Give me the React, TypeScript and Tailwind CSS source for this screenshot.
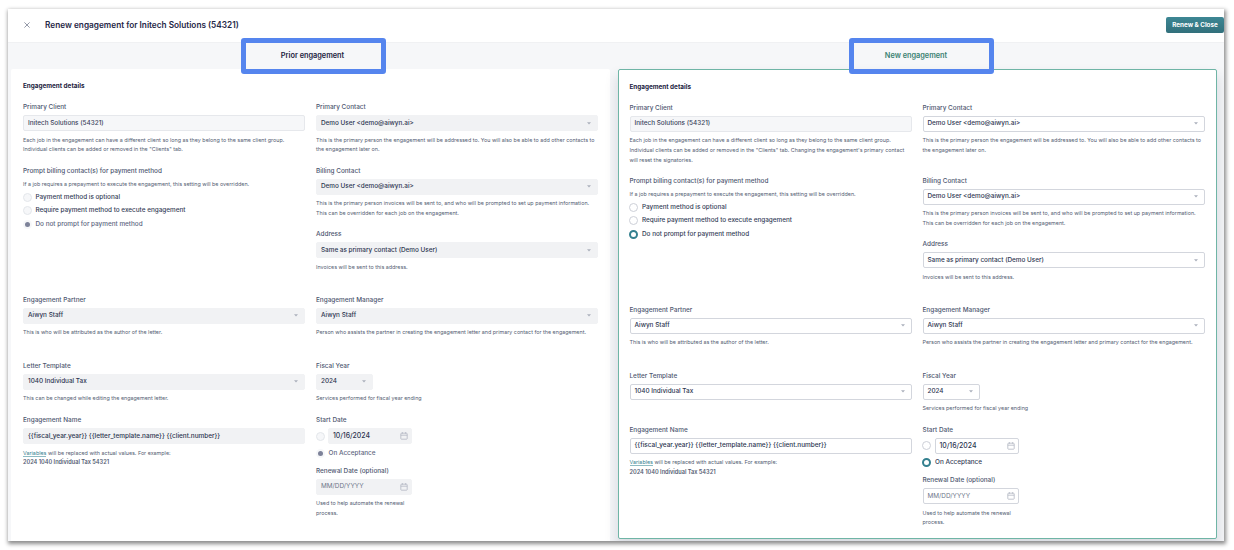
import { createContext, useContext } from "react";
import type { ReactNode } from "react";
import clsx from "clsx";

type Variant = "prior" | "new";

const VariantContext = createContext<Variant>("prior");

function useIsPrior(): boolean {
  return useContext(VariantContext) === "prior";
}

function Field({ label, className, children }: { label: string; className: string; children: ReactNode }): React.JSX.Element {
  return (
    <div className={clsx("flex shrink-0 flex-col", className)}>
      <p className="mb-[3px] h-[10px] whitespace-nowrap text-[6.42px] font-medium leading-[10px] text-[#4d566f]">{label}</p>
      {children}
    </div>
  );
}

function Help({ children, className = "mt-[4.6px]" }: { children: ReactNode; className?: string }): React.JSX.Element {
  return (
    <p className={clsx("whitespace-pre text-[5.39px] leading-[9.7px] text-[#535c72]", className)}>{children}</p>
  );
}

function Caret(): React.JSX.Element {
  return (
    <svg className="h-[3px] w-[4px] shrink-0 text-[#abb0bc]" viewBox="0 0 4 3" fill="currentColor">
      <path d="M0 0.2h4L2 2.4z" />
    </svg>
  );
}

function CalendarIcon(): React.JSX.Element {
  return (
    <svg className="h-[8px] w-[8px] shrink-0 text-[#b3b8c3]" viewBox="0 0 8 8" fill="none" stroke="currentColor" strokeWidth="0.8">
      <rect x="0.8" y="1.2" width="6.4" height="6" rx="0.7" />
      <path d="M0.8 3.2h6.4M2.4 0.1v1.6M5.6 0.1v1.6" />
    </svg>
  );
}

function Box({ children, icon, className, outlined }: { children: ReactNode; icon?: ReactNode; className?: string; outlined?: boolean }): React.JSX.Element {
  const prior = useIsPrior();

  return (
    <div
      className={clsx(
        "flex h-[16px] shrink-0 items-center justify-between rounded-[2px] border pl-[4px] text-[6.38px] font-medium",
        outlined
          ? "border-[#e6e8ec] bg-[#f6f7f9]"
          : prior
            ? "border-[#f1f2f4] bg-[#f1f2f4]"
            : "border-[#d3d6dd] bg-white",
        className,
      )}
    >
      <span className="whitespace-nowrap pt-[1.2px]">{children}</span>
      {icon}
    </div>
  );
}

function Select({ value, className }: { value: string; className?: string }): React.JSX.Element {
  return (
    <Box className={clsx("pr-[6px]", className)} icon={<Caret />}>
      <span className="text-[#2c3550]">{value}</span>
    </Box>
  );
}

function DateInput({ value, placeholder }: { value?: string; placeholder?: string }): React.JSX.Element {
  return (
    <Box className="pr-[3px]" icon={<CalendarIcon />}>
      {value ? (
        <span className="text-[6.9px] text-[#2c3550]">{value}</span>
      ) : (
        <span className="text-[6.4px] font-normal text-[#6f778a]">{placeholder}</span>
      )}
    </Box>
  );
}

function RadioDot({ checked }: { checked?: boolean }): React.JSX.Element {
  const prior = useIsPrior();

  if (prior && checked) {
    return (
      <span className="-ml-[0.5px] flex size-[9px] shrink-0 items-center justify-center rounded-full bg-[#f6f7f9]">
        <span className="size-[5px] rounded-full bg-[#7d8299]" />
      </span>
    );
  }
  return (
    <span
      className={clsx(
        "-ml-[0.5px] size-[9px] shrink-0 rounded-full",
        checked ? "border-[2.5px] border-[#34808f]" : "border",
        !checked && (prior ? "border-[#e4e7eb] bg-[#f6f7f9]" : "border-[#cdd0d8] bg-white"),
      )}
    />
  );
}

function Radio({ label, checked }: { label: string; checked?: boolean }): React.JSX.Element {
  const prior = useIsPrior();

  return (
    <div className="flex h-[13.5px] items-center gap-[4px] whitespace-nowrap text-[6.38px] font-medium">
      <RadioDot checked={checked} />
      <span className={clsx("pt-[0.5px]", prior && checked ? "text-[#5d6680]" : "text-[#333c56]")}>{label}</span>
    </div>
  );
}

function EngagementForm({ variant }: { variant: Variant }): React.JSX.Element {
  const prior = variant === "prior";

  return (
    <VariantContext.Provider value={variant}>
      <h2 className="mb-[11px] h-[10px] text-[6.35px] font-bold leading-[10px] text-[#1b2240]">
        Engagement details
      </h2>
      <div className="flex gap-[11px]">
        <div className="flex w-[282px] flex-col">
          <Field label="Primary Client" className={prior ? "h-[63.5px]" : "h-[73px]"}>
            <Box outlined>
              <span className="text-[#3a435c]">Initech Solutions (54321)</span>
            </Box>
            <Help>
              {"Each job in the engagement can have a different client so long as they belong to the same client group.\n"}
              {prior
                ? 'Individual clients can be added or removed in the "Clients" tab.'
                : 'Individual clients can be added or removed in the "Clients" tab. Changing the engagement\'s primary contact\nwill reset the signatories.'}
            </Help>
          </Field>
          <Field label="Prompt billing contact(s) for payment method" className="h-[129px]">
            <Help className="mt-[1px] mb-[1.3px]">If a job requires a prepayment to execute the engagement, this setting will be overridden.</Help>
            <Radio label="Payment method is optional" />
            <Radio label="Require payment method to execute engagement" />
            <Radio label="Do not prompt for payment method" checked />
          </Field>
          <Field label="Engagement Partner" className="h-[66px]">
            <Select value="Aiwyn Staff" />
            <Help>This is who will be attributed as the author of the letter.</Help>
          </Field>
          <Field label="Letter Template" className={prior ? "h-[54.5px]" : "h-[54px]"}>
            <Select value="1040 Individual Tax" />
            {prior ? <Help>This can be changed while editing the engagement letter.</Help> : null}
          </Field>
          <Field label="Engagement Name" className="h-[60px]">
            <Box>
              <span className="text-[6.45px] text-[#2c3550]">{"{{fiscal_year.year}} {{letter_template.name}} {{client.number}}"}</span>
            </Box>
            <Help>
              <span className="border-b border-[#8dbbc2] text-[#34808f]">Variables</span>
              {" will be replaced with actual values. For example:\n"}
              <span className="text-[5.6px] font-semibold">2024 1040 Individual Tax 54321</span>
            </Help>
          </Field>
        </div>

        <div className="flex w-[282px] flex-col">
          <Field label="Primary Contact" className={prior ? "h-[63.5px]" : "h-[73px]"}>
            <Select value="Demo User <demo@aiwyn.ai>" />
            <Help>{"This is the primary person the engagement will be addressed to. You will also be able to add other contacts to\nthe engagement later on."}</Help>
          </Field>
          <Field label="Billing Contact" className="h-[63.5px]">
            <Select value="Demo User <demo@aiwyn.ai>" />
            <Help>{"This is the primary person invoices will be sent to, and who will be prompted to set up payment information.\nThis can be overridden for each job on the engagement."}</Help>
          </Field>
          <Field label="Address" className="h-[65.5px]">
            <Select value="Same as primary contact (Demo User)" />
            <Help>Invoices will be sent to this address.</Help>
          </Field>
          <Field label="Engagement Manager" className="h-[66px]">
            <Select value="Aiwyn Staff" />
            <Help>Person who assists the partner in creating the engagement letter and primary contact for the engagement.</Help>
          </Field>
          <Field label="Fiscal Year" className={prior ? "h-[54.5px]" : "h-[54px]"}>
            <Select value="2024" className="w-[57px]" />
            <Help>Services performed for fiscal year ending</Help>
          </Field>
          <Field label="Start Date" className="h-[50.5px]">
            <div className="grid w-[96px] grid-cols-[9px_1fr] items-center gap-x-[3px]">
              <RadioDot />
              <DateInput value="10/16/2024" />
            </div>
            <div className="mt-[2.5px]">
              <Radio label="On Acceptance" checked />
            </div>
          </Field>
          <Field label="Renewal Date (optional)" className="w-[96px]">
            <DateInput placeholder="MM/DD/YYYY" />
            <Help>{"Used to help automate the renewal\nprocess."}</Help>
          </Field>
        </div>
      </div>
    </VariantContext.Provider>
  );
}

export default function App(): React.JSX.Element {
  return (
    <div className="h-[550px] w-[1234px] overflow-hidden bg-white pl-[8px] pt-[9px] font-['Inter',sans-serif]">
      <div className="relative h-[532px] w-[1216px] shadow-[1px_2px_4px_1px_rgba(0,0,0,0.45)]">
        <div className="flex h-full flex-col overflow-hidden bg-[#f6f7f9]">
          <header className="flex h-[33px] shrink-0 items-center bg-white pl-[15.5px]">
            <svg className="mb-[1px] size-[6px] text-[#7a8092]" viewBox="0 0 6 6" stroke="currentColor" strokeWidth="0.8">
              <path d="M0.4 0.4l5.2 5.2M5.6 0.4L0.4 5.6" />
            </svg>
            <h1 className="ml-[15.5px] text-[8.26px] font-semibold text-[#1f2747]">Renew engagement for Initech Solutions (54321)</h1>
            <button
              type="button"
              className="mb-[1px] ml-auto h-[16px] w-[58px] whitespace-nowrap rounded-[2px] bg-linear-to-b from-[#3d8794] to-[#32707c] pt-[1px] text-[6.3px] font-bold text-white"
            >
              Renew & Close
            </button>
          </header>

          <div className="flex h-[27px] shrink-0 items-center border-t border-[#f0f1f3] text-[7.34px] font-semibold">
            <p className="w-[609px] text-center text-[#1b2240]">Prior engagement</p>
            <p className="w-[598px] text-center text-[#3a8172]">New engagement</p>
          </div>

          <main className="flex min-h-0 flex-1 gap-[7.5px] pl-[3px]">
            <section className="w-[599px] shrink-0 rounded-t-[2px] bg-white pl-[12px] pt-[12px]">
              <EngagementForm variant="prior" />
            </section>
            <section className="mb-[2px] w-[599.5px] shrink-0 rounded-[2px] border border-[#6fb5a6] bg-white pl-[11px] pt-[11.5px] shadow-[0_8px_12px_2px_rgba(30,45,75,0.13)]">
              <EngagementForm variant="new" />
            </section>
          </main>
        </div>

        <div className="absolute left-[233px] top-[29.4px] h-[36px] w-[145px] rounded-[3px] border-5 border-[#5585ee]" />
        <div className="absolute left-[841.4px] top-[29.4px] h-[36px] w-[145px] rounded-[3px] border-5 border-[#5585ee]" />
      </div>
    </div>
  );
}
